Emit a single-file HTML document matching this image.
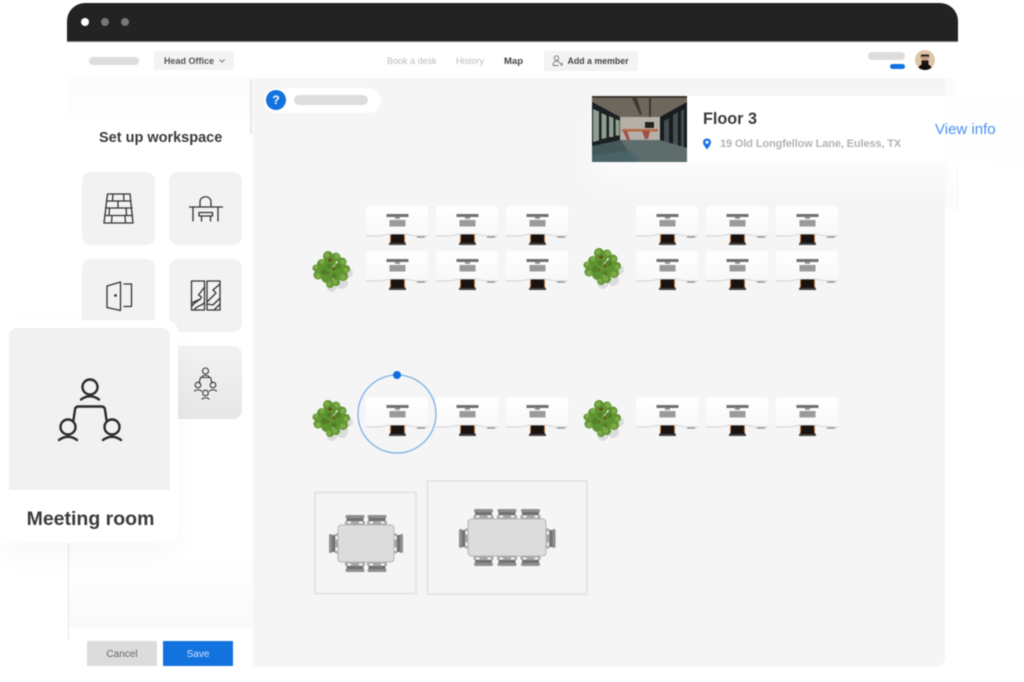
<!DOCTYPE html>
<html lang="en">
<head>
<meta charset="utf-8">
<title>Set up workspace</title>
<style>
html,body{margin:0;padding:0;background:#fff}
#w{position:relative;width:1024px;height:682px;overflow:hidden;background:#fff;font-family:"Liberation Sans",sans-serif;color:#333;filter:blur(.55px)}
#w div,#w svg.a{position:absolute}
.t{white-space:nowrap;line-height:1}
.tile{width:73px;height:73px;background:#f2f2f2;border-radius:9px}
</style>
</head>
<body>
<div id="w">
  <!-- map and sidebar -->
  <div style="left:68px;top:78px;width:185px;height:590px;background:linear-gradient(#fbfbfb,#fff 45px,#fff 480px,#fafafa 549px,#fff 550px)"></div>
  <div style="left:253px;top:78px;width:692px;height:589px;background:#f5f5f5;border-radius:0 0 10px 0"></div>
  <div style="left:945px;top:78px;width:14px;height:130px;background:linear-gradient(90deg,#fafafa,#fff)"></div>
  <div style="left:957px;top:163px;width:1px;height:48px;background:#f0f0f0"></div>
  <div style="left:68px;top:543px;width:1px;height:98px;background:#e6e6e6"></div>
  <div style="left:250px;top:80px;width:2px;height:54px;background:#e8e8e8"></div>

  <!-- title bar -->
  <div style="left:67px;top:3px;width:891px;height:39px;background:#232323;border-radius:18px 18px 0 0;border-bottom:1px solid #777;box-sizing:border-box"></div>
  <div style="left:81px;top:18px;width:8px;height:8px;border-radius:50%;background:#fff"></div>
  <div style="left:101px;top:18px;width:8px;height:8px;border-radius:50%;background:#777"></div>
  <div style="left:121px;top:18px;width:8px;height:8px;border-radius:50%;background:#777"></div>

  <!-- header -->
  <div style="left:89px;top:57px;width:50px;height:8px;border-radius:4px;background:#ddd"></div>
  <div style="left:154px;top:51px;width:80px;height:19px;background:#f3f3f3"></div>
  <div class="t" style="left:164px;top:56.500px;font-size:9px;font-weight:700;color:#555">Head Office</div>
  <svg class="a" style="left:218px;top:57.500px" width="8" height="6" viewBox="0 0 8 6"><path d="M1.500 1.500 4 4l2.500-2.500" fill="none" stroke="#777" stroke-width="1"/></svg>
  <div class="t" style="left:387px;top:56.500px;font-size:9px;color:#bbb">Book a desk</div>
  <div class="t" style="left:456px;top:56.500px;font-size:9px;color:#bbb">History</div>
  <div class="t" style="left:504px;top:56.500px;font-size:9.500px;font-weight:700;color:#444">Map</div>
  <div style="left:544px;top:51px;width:94px;height:20px;background:#f3f3f3"></div>
  <svg class="a" style="left:552px;top:55px" width="12" height="12" viewBox="0 0 12 12" fill="none" stroke="#777" stroke-width=".9"><circle cx="4.500" cy="3" r="2.200"/><path d="M1 10.500c0-3 1.500-4.500 3.500-4.500s3 1 3.300 2.500M1 10.500h5.500M9.500 7.500v3.500M8 9.200h3.200"/></svg>
  <div class="t" style="left:567.500px;top:57px;font-size:8.800px;font-weight:700;color:#444">Add a member</div>
  <div style="left:868px;top:52px;width:37px;height:8px;border-radius:4px;background:#ddd"></div>
  <div style="left:890px;top:63.500px;width:15px;height:5px;border-radius:3px;background:#1273de"></div>
  <svg class="a" style="left:915px;top:50px" width="20" height="20" viewBox="0 0 20 20"><defs><clipPath id="av"><circle cx="10" cy="10" r="10"/></clipPath></defs><g clip-path="url(#av)"><rect width="20" height="20" fill="#dcc4a8"/><path d="M6 4.500h8v3H6z" fill="#2a2420"/><rect x="6.500" y="6.500" width="7" height="7" fill="#c59f80"/><path d="M6.500 10.500h7v4h-7z" fill="#1a1716"/><path d="M3 20c0-4 3-6 7-6s7 2 7 6z" fill="#111"/></g></svg>

  <!-- question pill -->
  <div style="left:264px;top:88px;width:117px;height:25px;border-radius:13px;background:#fff"></div>
  <div class="t" style="left:266px;top:90px;width:20px;height:20px;border-radius:50%;background:#1273de;color:#fff;font-size:12px;font-weight:700;text-align:center;line-height:20px">?</div>
  <div style="left:294px;top:95px;width:74px;height:10px;border-radius:5px;background:#ddd"></div>

  <!-- floor card -->
  <div style="left:592px;top:96px;width:432px;height:66px;background:linear-gradient(90deg,#fff 80%,#fdfdfd);box-shadow:0 22px 30px rgba(255,255,255,.6)"></div>
  <svg class="a" style="left:592px;top:96px" width="95" height="66" viewBox="0 0 95 66">
    <rect width="95" height="66" fill="#3b4446"/>
    <path d="M0 0h95v8L68 21H28L0 6z" fill="#6e675c"/>
    <path d="M0 0h95v2H0zM40 2l8 17h2L45 2zM57 2v19h2V2z" fill="#3c3832"/>
    <rect x="28" y="21" width="40" height="24" fill="#b4b0a8"/>
    <rect x="53" y="26" width="9" height="6" fill="#222"/>
    <path d="M0 6l28 15v25L0 54z" fill="#1a2023"/>
    <path d="M1 13l6 2.500v29l-6 1.500zM9.500 17l5 2.500v22.500l-5 1zM17 20l4.500 2v19h-4.500zM23.500 23l4 1.500v15h-4z" fill="#8e9c8d"/>
    <path d="M68 21 95 6v57L68 46z" fill="#171c1e"/>
    <path d="M72 25l5-3v26l-5-2zM81 19l5-3v36l-5-2zM89 15l3-2v40l-3-1z" fill="#444f50"/>
    <path d="M0 50l28-6h40l27 8v14H0z" fill="#44585a"/>
    <path d="M28 44h40l27 8v14H45z" fill="#6a7672" opacity=".7"/>
    <path d="M0 60l40-6 10 12H0z" fill="#4f686c" opacity=".7"/>
    <rect x="30" y="33" width="36" height="2.500" fill="#b86a45"/>
    <path d="M31 35h4l3 9h-3zM50 35h8l-2 8h-3z" fill="#9c3f3a" opacity=".85"/>
  </svg>
  <div class="t" style="left:703px;top:110.500px;font-size:16.200px;font-weight:700;color:#3a3a3a">Floor 3</div>
  <svg class="a" style="left:702px;top:138px" width="10" height="12" viewBox="0 0 10 12"><path d="M5 .5C2.500.5 1 2.300 1 4.300 1 7 5 11.500 5 11.500S9 7 9 4.300C9 2.300 7.500.5 5 .5z" fill="#1b73e8"/><circle cx="5" cy="4.300" r="1.500" fill="#fff"/></svg>
  <div class="t" style="left:720px;top:139px;font-size:11px;font-weight:700;color:#b3b3b3;letter-spacing:-.12px">19 Old Longfellow Lane, Euless, TX</div>
  <div class="t" style="left:935px;top:122px;font-size:15px;color:#4a90f0">View info</div>

  <!-- sidebar -->
  <div class="t" style="left:99px;top:130.500px;font-size:14.500px;font-weight:700;color:#3a3a3a">Set up workspace</div>
  <div class="tile" style="left:82px;top:172px"></div>
  <div class="tile" style="left:169px;top:172px"></div>
  <div class="tile" style="left:82px;top:259px"></div>
  <div class="tile" style="left:169px;top:259px"></div>
  <div class="tile" style="left:169px;top:346px;background:linear-gradient(#f2f2f2,#e7e7e7)"></div>
  <svg class="a" style="left:80px;top:170px" width="165" height="255" viewBox="80 170 165 255" fill="none" stroke="#333" stroke-width="1.300" stroke-linejoin="round" stroke-linecap="round">
    <path d="M107.500 194h22.500l3 29h-29zM106.500 201h24.500M105.500 208h26.500M104.800 215.500h27.600M113 194l-.5 7M123.500 194l.5 7M118 201v7M109.500 208l-.5 7.500M126 208l.5 7.500M112 215.500l-.5 7.500M125 215.500l.5 7.500"/>
    <path d="M189.500 207h33M193 207v14M218 207v14M200 207v-5c0-7 11-7 11 0v5M199 212.500h13.500v3.500h-13.500zM201.500 216v5M210.500 216v5"/>
    <path d="M107 286l13.500-4v28.500l-13.500-3zM124 284h7.500v22.500H124"/><circle cx="115.500" cy="295.500" r=".7" fill="#3a3a3a"/>
    <path d="M191.500 281h13v29h-13zM207 281h13v29h-13zM191.500 307c3-6 9-6 10-10l-3-2 6-8M191.500 303l9-4M194 310c3-5 8-4 10-7M220 284l-7 6 3 3-9 9M207 304l6 1 7-7M214 310l6-6"/>
    <g stroke-width="1.100"><circle cx="205.500" cy="371" r="3"/><path d="M202 376.500q3.500-2.500 7 0M199 383l1.500-5.500h10l1.500 5.500"/><circle cx="198" cy="385" r="2.800"/><path d="M194.500 391q3.500-2.500 7 0"/><circle cx="213" cy="385" r="2.800"/><path d="M209.500 391q3.500-2.500 7 0"/><circle cx="205.500" cy="393" r="2.800"/><path d="M202 399q3.500-2.500 7 0"/></g>
  </svg>
  <div class="t" style="left:87px;top:641px;width:70px;height:25px;background:#dcdcdc;text-align:center;line-height:27px;font-size:10px;color:#666">Cancel</div>
  <div class="t" style="left:163px;top:641px;width:70px;height:25px;background:#1273de;text-align:center;line-height:27px;font-size:10px;color:#cfe2fb">Save</div>

  <!-- meeting room card -->
  <div style="left:0;top:320px;width:178px;height:223px;background:#fff;border-radius:0 12px 12px 0;box-shadow:0 12px 30px rgba(0,0,0,.03)"></div>
  <div style="left:9px;top:328px;width:161px;height:162px;background:#f1f1f1;border-radius:8px 8px 0 0"></div>
  <svg class="a" style="left:50px;top:370px" width="80" height="75" viewBox="50 370 80 75" fill="none" stroke="#2a2a2a" stroke-width="2.400" stroke-linecap="round" stroke-linejoin="round">
    <circle cx="90" cy="387" r="7.500"/><path d="M81 399.500q9-6.500 18 0"/>
    <path d="M73.500 420l1.500-10.500q.5-3 3.500-3h23q3 0 3.500 3l1.500 10.500"/>
    <circle cx="68" cy="427" r="7.500"/><path d="M59 440q9-6.500 18 0"/>
    <circle cx="112" cy="427" r="7.500"/><path d="M103 440q9-6.500 18 0"/>
  </svg>
  <div class="t" style="left:0;top:510px;width:181px;text-align:center;font-size:19.500px;font-weight:700;color:#3a3a3a">Meeting room</div>

  <!-- floor plan -->
  <svg class="a" style="left:253px;top:180px" width="692" height="430" viewBox="253 180 692 430">
    <defs>
      <linearGradient id="dg" x1="0" y1="0" x2="0" y2="1"><stop offset="0" stop-color="#fff"/><stop offset="1" stop-color="#f8f8f8"/></linearGradient>
      <g id="desk">
        <rect x="24" y="26" width="15" height="12.500" fill="#181211"/>
        <rect x="24" y="26" width="1" height="10" fill="#c87a3c"/><rect x="38" y="26" width="1" height="10" fill="#c87a3c"/>
        <rect x="23" y="37" width="17" height="2" fill="#444"/>
        <path d="M3 0H59a3 3 0 0 1 3 3V30H52C45 30 43 28 37 28H26C20 28 18 30 11 30H0V3A3 3 0 0 1 3 0z" fill="url(#dg)"/>
        <path d="M0 30H11C18 30 20 28 26 28H37C43 28 45 30 52 30H62" fill="none" stroke="#d2d2d2" stroke-width="1"/>
        <rect x="20.500" y="8" width="22" height="3" fill="#707070"/><rect x="29" y="11" width="5" height="2" fill="#999"/>
        <rect x="23.500" y="14" width="16" height="6.500" fill="#9a9a9a"/>
        <rect x="51" y="30.300" width="8" height="1.500" fill="#999"/>
      </g>
      <g id="plant">
        <g fill="#dcdcdc">
          <circle cx="17" cy="4" r="5"/><circle cx="11" cy="14" r="6"/><circle cx="1" cy="18" r="5"/>
        </g>
        <g fill="#5f9330">
          <circle cx="-3" cy="-13" r="5"/><circle cx="5" cy="-12" r="4.500"/><circle cx="-1" cy="-8" r="6"/>
          <circle cx="11" cy="-7" r="4.500"/><circle cx="15" cy="0" r="4"/><circle cx="12" cy="7" r="5"/>
          <circle cx="7" cy="3" r="7"/><circle cx="5" cy="13" r="4"/><circle cx="-1" cy="15" r="4"/><circle cx="-4" cy="8" r="6"/>
          <circle cx="-13" cy="6" r="4.500"/><circle cx="-15" cy="-1" r="3.500"/><circle cx="-9" cy="-5" r="5"/><circle cx="-5" cy="0" r="7"/>
        </g>
        <g fill="#7dab48">
          <circle cx="6" cy="-13" r="2.800"/><circle cx="12" cy="-7" r="2.500"/><circle cx="15" cy="1" r="2.500"/><circle cx="12" cy="8" r="2.800"/>
          <circle cx="4" cy="13" r="2.500"/><circle cx="-2" cy="15" r="2.500"/><circle cx="-13" cy="7" r="2.800"/><circle cx="-15" cy="-2" r="2.300"/><circle cx="-4" cy="-14" r="2.500"/><circle cx="-9" cy="-7" r="2.500"/>
        </g>
        <g fill="#517f27"><circle cx="-7" cy="3" r="3"/><circle cx="7" cy="-3" r="3"/><circle cx="3" cy="7" r="2.500"/><circle cx="-2" cy="-3" r="2.500"/></g>
        <g fill="#6a4a20"><circle cx="-1" cy="-9" r="1.800"/><circle cx="3" cy="0" r="1.300"/><circle cx="-3" cy="4" r="1"/></g>
      </g>
      <g id="ch">
        <rect x="0" y="0" width="19" height="3.200" rx="1.500" fill="#8f8f8f"/>
        <rect x="1" y="3" width="17" height="3.500" fill="#727272"/>
        <rect x="-.5" y="6" width="20" height="4" rx="1" fill="#a6a6a6"/>
        <rect x="2" y="6.500" width="3.500" height="2" fill="#f5f5f5"/><rect x="13.500" y="6.500" width="3.500" height="2" fill="#f5f5f5"/>
      </g>
    </defs>
    <use href="#desk" x="366" y="206"/><use href="#desk" x="436" y="206"/><use href="#desk" x="506" y="206"/>
    <use href="#desk" x="636" y="206"/><use href="#desk" x="706" y="206"/><use href="#desk" x="776" y="206"/>
    <use href="#desk" x="366" y="251"/><use href="#desk" x="436" y="251"/><use href="#desk" x="506" y="251"/>
    <use href="#desk" x="636" y="251"/><use href="#desk" x="706" y="251"/><use href="#desk" x="776" y="251"/>
    <use href="#desk" x="366" y="397"/><use href="#desk" x="436" y="397"/><use href="#desk" x="506" y="397"/>
    <use href="#desk" x="636" y="397"/><use href="#desk" x="706" y="397"/><use href="#desk" x="776" y="397"/>
    <use href="#plant" x="331" y="269"/><use href="#plant" x="602" y="266"/><use href="#plant" x="331" y="418"/><use href="#plant" x="602" y="418"/>
    <circle cx="397" cy="414" r="39" fill="none" stroke="#73ade9" stroke-width="1.200"/>
    <circle cx="397" cy="375" r="4" fill="#0f6fde"/>

    <rect x="315" y="492.500" width="101" height="101" fill="none" stroke="#e5e5e5" stroke-width="2"/>
    <rect x="427.500" y="481" width="159.500" height="113" fill="none" stroke="#e5e5e5" stroke-width="2"/>

    <use href="#ch" x="345.500" y="515"/><use href="#ch" x="367.500" y="515"/>
    <use href="#ch" transform="translate(345.500 572) scale(1 -1)"/>
    <use href="#ch" transform="translate(367.500 572) scale(1 -1)"/>
    <use href="#ch" transform="translate(329 553) rotate(-90)"/>
    <use href="#ch" transform="translate(403 534) rotate(90)"/>
    <rect x="338" y="525" width="56" height="37" rx="3" fill="#dcdcdc" stroke="#b5b5b5"/>

    <use href="#ch" x="474" y="509"/><use href="#ch" x="497.500" y="509"/><use href="#ch" x="521" y="509"/>
    <use href="#ch" transform="translate(474 566) scale(1 -1)"/><use href="#ch" transform="translate(497.500 566) scale(1 -1)"/><use href="#ch" transform="translate(521 566) scale(1 -1)"/>
    <use href="#ch" transform="translate(459 548) rotate(-90)"/>
    <use href="#ch" transform="translate(555.500 529) rotate(90)"/>
    <rect x="468" y="519" width="78" height="37" rx="3.500" fill="#dcdcdc" stroke="#b5b5b5"/>
  </svg>
</div>
</body>
</html>
